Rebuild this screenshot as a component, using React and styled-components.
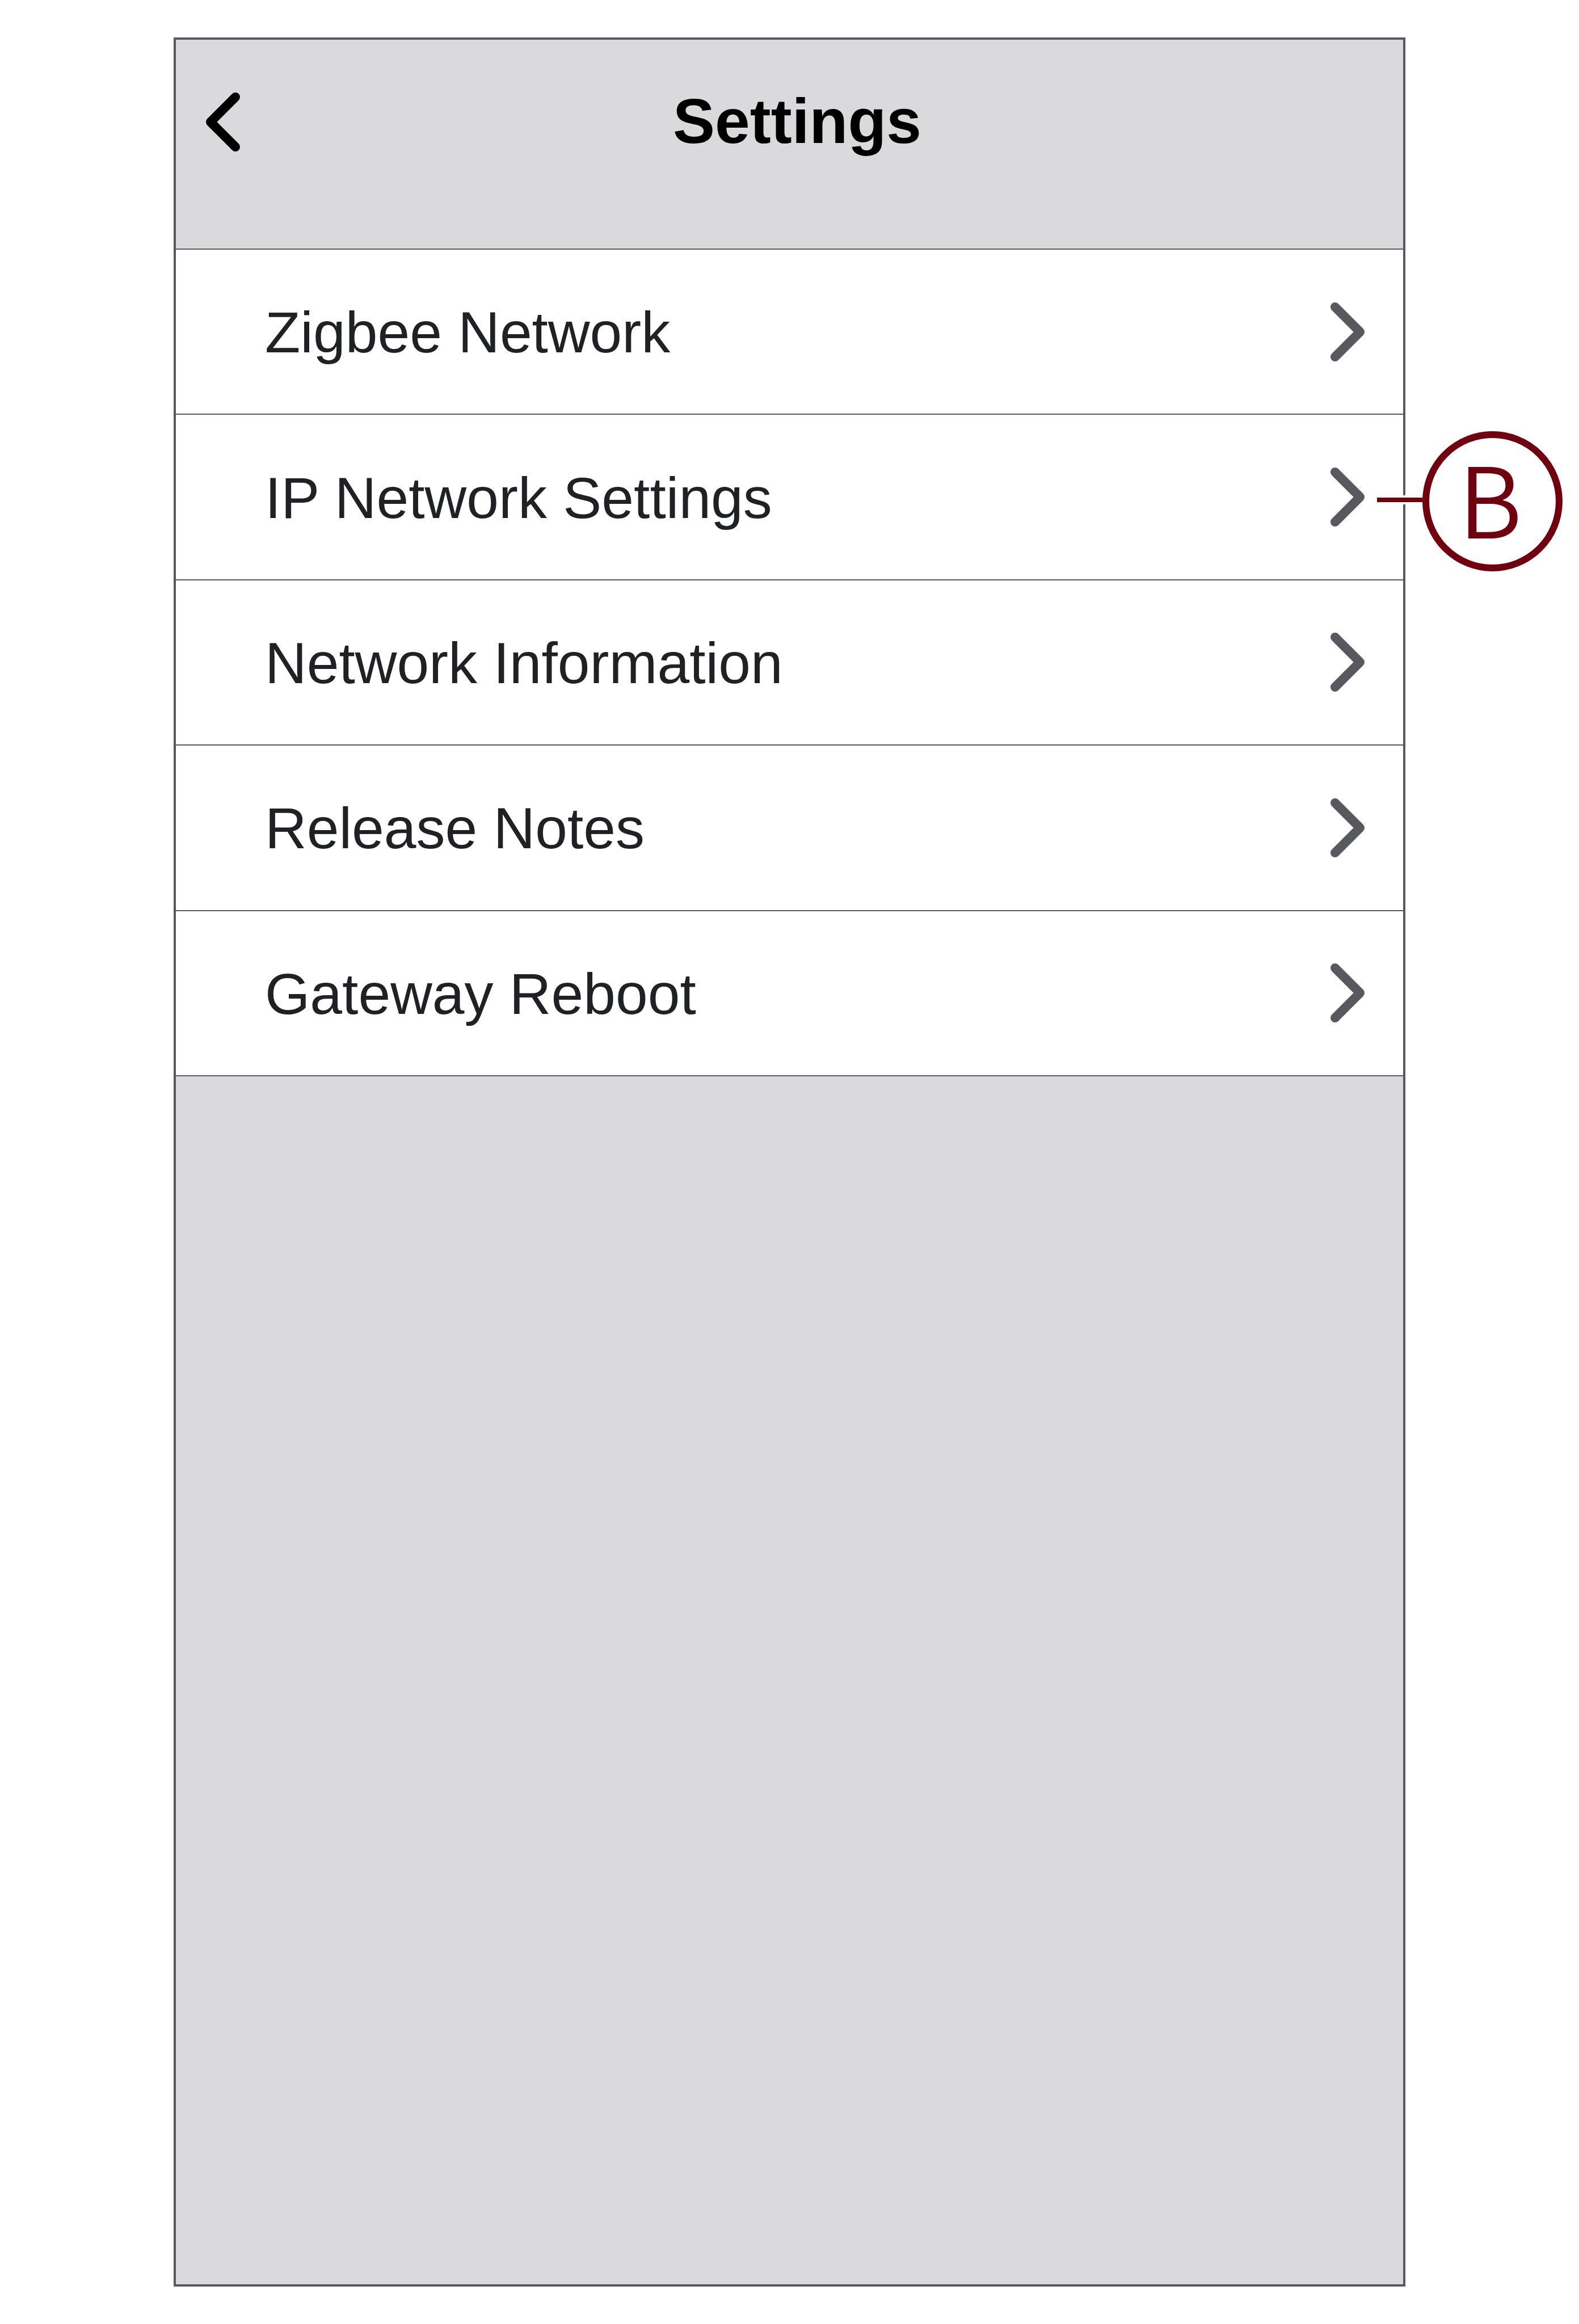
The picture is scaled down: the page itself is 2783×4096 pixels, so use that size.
import styled, { createGlobalStyle } from "styled-components";

const items = [
  { id: "zigbee", label: "Zigbee Network" },
  { id: "ip", label: "IP Network Settings", callout: "B" },
  { id: "info", label: "Network Information" },
  { id: "notes", label: "Release Notes" },
  { id: "reboot", label: "Gateway Reboot" },
];

function Chevron({ direction = "right" }) {
  return (
    <ChevronIcon viewBox="0 0 60 104" aria-hidden="true">
      <path d={direction === "left" ? "M52 8L8 52L52 96" : "M8 8L52 52L8 96"} />
    </ChevronIcon>
  );
}

export default function App() {
  return (
    <>
      <GlobalStyle />
      <Page>
        <Panel>
          <Header>
            <BackButton type="button" aria-label="Back">
              <Chevron direction="left" />
            </BackButton>
            <Title>Settings</Title>
          </Header>
          <List>
            {items.map(item => (
              <Item key={item.id}>
                <ItemButton type="button">
                  <Label>{item.label}</Label>
                  <Chevron />
                </ItemButton>
                {item.callout && (
                  <Callout>
                    <CalloutLine />
                    <CalloutCircle>{item.callout}</CalloutCircle>
                  </Callout>
                )}
              </Item>
            ))}
          </List>
        </Panel>
      </Page>
    </>
  );
}

const GlobalStyle = createGlobalStyle`
  * {
    box-sizing: border-box;
  }

  body {
    margin: 0;
    background: #fff;
    font-family: "Liberation Sans", Arial, sans-serif;
  }
`;

const Page = styled.div`
  min-height: 100vh;
  padding: 66px 306px;
  display: flex;
`;

const Panel = styled.main`
  flex: 1;
  min-width: 0;
  border: 4px solid #58595e;
  background: #dadadc;
`;

const Header = styled.header`
  display: flex;
  align-items: flex-start;
  min-height: 370px;
  padding: 93px 86px 0 53px;
  border-bottom: 2px solid #58595e;
`;

const BackButton = styled.button`
  display: flex;
  padding: 0;
  border: none;
  background: none;
  color: #000;
  cursor: pointer;
`;

const Title = styled.h1`
  flex: 1;
  margin: 0;
  color: #000;
  font-size: 111px;
  font-weight: 700;
  line-height: 102px;
  text-align: center;
`;

const List = styled.ul`
  display: grid;
  grid-auto-rows: 1fr;
  min-height: 1457px;
  margin: 0;
  padding: 0;
  list-style: none;
`;

const Item = styled.li`
  position: relative;
  display: flex;
  background: #fff;
  border-bottom: 2px solid #58595e;
`;

const ItemButton = styled.button`
  flex: 1;
  display: flex;
  align-items: center;
  justify-content: space-between;
  padding: 0 68px 0 157px;
  border: none;
  background: none;
  color: #202125;
  font-family: inherit;
  font-size: 102px;
  text-align: left;
  cursor: pointer;

  svg {
    color: #58595e;
  }
`;

const Label = styled.span`
  padding-top: 4px;
`;

const ChevronIcon = styled.svg`
  width: 60px;
  height: 104px;
  fill: none;
  stroke: currentColor;
  stroke-width: 16;
  stroke-linecap: round;
  stroke-linejoin: round;
`;

/* sits over the row and hangs out past the panel edge */
const Callout = styled.div`
  position: absolute;
  top: 29px;
  left: calc(100% - 46px);
  display: flex;
  align-items: center;
`;

const CalloutLine = styled.span`
  width: 80px;
  height: 8px;
  margin-bottom: 6px;
  background: #70020f;
  box-shadow: 0 0 0 4px #fff;
`;

const CalloutCircle = styled.span`
  display: flex;
  align-items: center;
  justify-content: center;
  width: 247px;
  height: 247px;
  padding: 0 8px 20px 0;
  border: 12px solid #70020f;
  border-radius: 50%;
  background: #fff;
  color: #70020f;
  font-family: "Noto Sans CJK SC", "Open Sans", sans-serif;
  font-size: 172px;
  font-weight: 350;
  line-height: 1;
`;
